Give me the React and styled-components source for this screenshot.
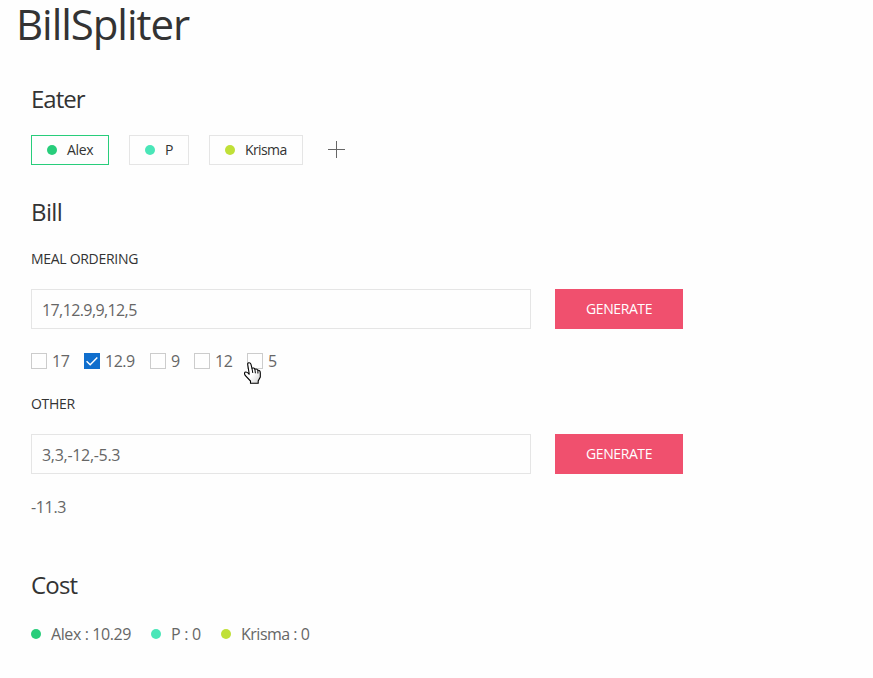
import React from "react";
import styled, { createGlobalStyle } from "styled-components";

const GlobalStyle = createGlobalStyle`
  * { box-sizing: border-box; }
  body {
    margin: 0;
    background: #fefefe;
    color: #666;
    font-family: "Open Sans", "Noto Sans", sans-serif;
    font-size: 16px;
    font-weight: 400;
  }
`;

const Page = styled.main`
  position: relative;
  height: 678px;
  padding-left: 31px;
`;

const Title = styled.h1`
  margin: 0 0 0 -15px;
  height: 83px;
  font-size: 42px;
  line-height: 48px;
  font-weight: 400;
  letter-spacing: -1.05px;
  color: #333;
`;

const Heading = styled.h2`
  margin: 0;
  height: ${(p) => p.$height}px;
  font-size: 24px;
  line-height: 32px;
  font-weight: 400;
  letter-spacing: ${(p) => p.$spacing || 0}px;
  color: #333;
`;

const Label = styled.h3`
  margin: 0;
  height: 40px;
  font-size: 14px;
  line-height: 20px;
  font-weight: 400;
  letter-spacing: -0.3px;
  color: #333;
`;

const Eaters = styled.div`
  display: flex;
  align-items: center;
  gap: 20px;
  height: 30px;
  margin-bottom: 31px;
`;

const EaterButton = styled.button`
  display: flex;
  align-items: center;
  gap: 10px;
  width: ${(p) => p.$width}px;
  height: 30px;
  padding: 0 0 0 15px;
  border: 1px solid ${(p) => (p.$active ? "#28cd7b" : "#e5e5e5")};
  background: transparent;
  font: 14px/28px "Open Sans", sans-serif;
  letter-spacing: ${(p) => p.$spacing || 0}px;
  color: #333;
`;

const Dot = styled.span`
  flex: none;
  width: 10px;
  height: 10px;
  border-radius: 50%;
  background: ${(p) => p.$color};
`;

const AddIcon = styled.svg`
  display: block;
  margin-left: 5px;
`;

const Entry = styled.div`
  display: flex;
  gap: 24px;
  height: 40px;
  margin-bottom: 22px;
`;

const Field = styled.input`
  width: 500px;
  height: 40px;
  padding: 2px 10px 0;
  border: 1px solid #e5e5e5;
  border-radius: 0;
  background: transparent;
  font: 16px "Open Sans", sans-serif;
  letter-spacing: ${(p) => p.$spacing}px;
  color: #666;
`;

const Generate = styled.button`
  width: 128px;
  height: 40px;
  padding: 0;
  border: 0;
  background: #f0506e;
  color: #fff;
  font: 14px/40px "Open Sans", sans-serif;
  letter-spacing: -0.4px;
`;

const Checks = styled.div`
  display: flex;
  height: 43px;
`;

const Check = styled.label`
  display: flex;
  align-items: center;
  gap: 5px;
  width: ${(p) => p.$width}px;
  height: 20px;
  letter-spacing: -0.5px;
  white-space: nowrap;
`;

const Box = styled.span`
  flex: none;
  width: 16px;
  height: 16px;
  border: 1px solid ${(p) => (p.$checked ? "#0f6ecd" : "#ccc")};
  background: ${(p) => (p.$checked ? "#0f6ecd" : "transparent")};
  svg { display: block; }
`;

const Total = styled.p`
  margin: 0;
  height: 73px;
  line-height: 22px;
  letter-spacing: -0.35px;
`;

const Costs = styled.div`
  display: flex;
  height: 24px;
`;

const Cost = styled.div`
  display: flex;
  align-items: center;
  gap: 10px;
  width: ${(p) => p.$width}px;
  letter-spacing: ${(p) => p.$spacing}px;
  white-space: nowrap;
`;

const Pointer = styled.svg`
  position: absolute;
  left: 244px;
  top: 362px;
`;

const eaters = [
  { name: "Alex", color: "#28cd7b", width: 78, active: true, spacing: -0.3, cost: "10.29", costWidth: 120, costSpacing: -0.4 },
  { name: "P", color: "#4ae6b8", width: 60, spacing: 0, cost: "0", costWidth: 70, costSpacing: -0.3 },
  { name: "Krisma", color: "#c0e038", width: 94, spacing: -0.6, cost: "0", costWidth: 100, costSpacing: -0.5 },
];

const meals = [
  { value: "17", width: 53 },
  { value: "12.9", width: 66, checked: true },
  { value: "9", width: 44 },
  { value: "12", width: 53 },
  { value: "5", width: 40 },
];

export default function App() {
  return (
    <Page>
      <GlobalStyle />
      <Title>BillSpliter</Title>
      <Heading $height={52} $spacing={-1}>Eater</Heading>
      <Eaters>
        {eaters.map((e) => (
          <EaterButton key={e.name} $width={e.width} $active={e.active} $spacing={e.spacing}>
            <Dot $color={e.color} />
            {e.name}
          </EaterButton>
        ))}
        <AddIcon width="18" height="18" viewBox="0 0 18 18" stroke="#666" shapeRendering="crispEdges">
          <path d="M8.5 0v17M0 8.5h17" />
        </AddIcon>
      </Eaters>
      <Heading $height={53} $spacing={-0.6}>Bill</Heading>
      <Label>MEAL ORDERING</Label>
      <Entry>
        <Field defaultValue="17,12.9,9,12,5" $spacing={-0.6} />
        <Generate>GENERATE</Generate>
      </Entry>
      <Checks>
        {meals.map((m) => (
          <Check key={m.value} $width={m.width}>
            <Box $checked={m.checked}>
              {m.checked && (
                <svg width="14" height="14" viewBox="0 0 14 14" fill="none" stroke="#fff" strokeWidth="1.4">
                  <path d="M1.6 7.2 5.2 10.8 12.3 3.6" />
                </svg>
              )}
            </Box>
            {m.value}
          </Check>
        ))}
      </Checks>
      <Label>OTHER</Label>
      <Entry>
        <Field defaultValue="3,3,-12,-5.3" $spacing={-0.3} />
        <Generate>GENERATE</Generate>
      </Entry>
      <Total>-11.3</Total>
      <Heading $height={53} $spacing={-0.8}>Cost</Heading>
      <Costs>
        {eaters.map((e) => (
          <Cost key={e.name} $width={e.costWidth} $spacing={e.costSpacing}>
            <Dot $color={e.color} />
            {e.name} : {e.cost}
          </Cost>
        ))}
      </Costs>
      <Pointer width="20" height="23" viewBox="0 0 20 23">
        <defs>
          <linearGradient id="handFill" x1="0" y1="0" x2="1" y2="1">
            <stop offset="0.55" stopColor="#fff" />
            <stop offset="1" stopColor="#ccc" />
          </linearGradient>
        </defs>
        <path
          d="M5.3 12.5 3.8 3Q3.3 1 4.8.7 6.4.5 6.9 2.2L8 6.4Q9.9 5.2 10.9 7.2 13 6.4 13.9 8.3 16.3 8 16.3 11V15L14.2 19V21.3H6.5V19L1.2 13.5Q0 11.2.9 10.3 2.8 9 5.3 12.5Z"
          fill="url(#handFill)"
          stroke="#000"
          strokeWidth="1.1"
        />
        <path d="M8 6.5 8.8 11M10.9 7.3 11.4 11.3M13.9 8.3V11.5" stroke="#000" fill="none" />
      </Pointer>
    </Page>
  );
}
